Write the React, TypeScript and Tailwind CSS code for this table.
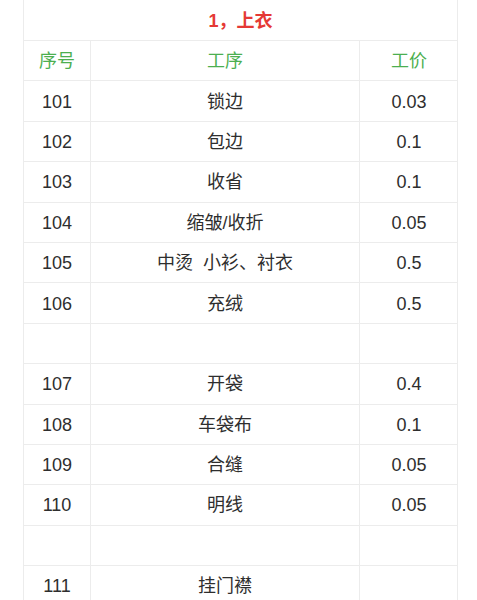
const rows: [string, string, string][] = [
  ["101", "锁边", "0.03"],
  ["102", "包边", "0.1"],
  ["103", "收省", "0.1"],
  ["104", "缩皱/收折", "0.05"],
  ["105", "中烫  小衫、衬衣", "0.5"],
  ["106", "充绒", "0.5"],
  ["", "", ""],
  ["107", "开袋", "0.4"],
  ["108", "车袋布", "0.1"],
  ["109", "合缝", "0.05"],
  ["110", "明线", "0.05"],
  ["", "", ""],
  ["111", "挂门襟", ""],
];

function Row({ cells, head }: { cells: [string, string, string]; head?: boolean }) {
  const color = head ? "text-[#4caf50]" : "text-[#2e2e2e]";
  return (
    <div className={`grid grid-cols-[67px_269px_98px] h-[40.4px] border-b border-[#ececec] ${color}`}>
      <div className="flex items-center justify-center pt-[2px] border-r border-[#ececec]">{cells[0]}</div>
      <div className="flex items-center justify-center pt-[2px] border-r border-[#ececec] whitespace-pre">{cells[1]}</div>
      <div className="flex items-center justify-center pt-[2px]">{cells[2]}</div>
    </div>
  );
}

export default function App() {
  return (
    <div
      className="w-[477px] h-[600px] overflow-hidden bg-white text-[18px]"
      style={{ fontFamily: '"Liberation Sans", "Noto Sans CJK SC", sans-serif' }}
    >
      <div className="ml-[23px] w-[435px] border-l border-r border-[#ececec]">
        <div className="h-[41px] flex items-center justify-center pt-[2px] border-b border-[#ececec] border-r-[#d6d6d6] font-bold text-[#e53935]">
          1，上衣
        </div>
        <Row cells={["序号", "工序", "工价"]} head />
        {rows.map((r, i) => (
          <Row key={i} cells={r} />
        ))}
      </div>
    </div>
  );
}
